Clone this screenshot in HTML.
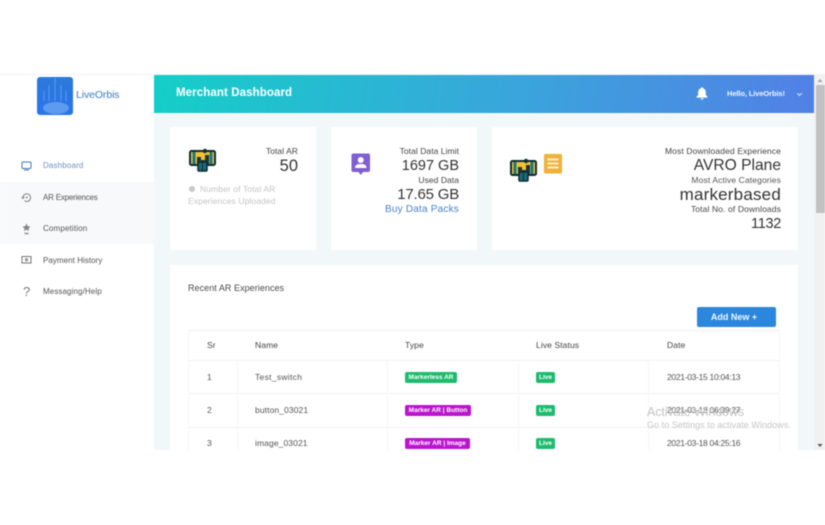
<!DOCTYPE html>
<html><head><meta charset="utf-8">
<style>
html,body{margin:0;padding:0;background:#fff;width:825px;height:525px;overflow:hidden}
body{font-family:"Liberation Sans",sans-serif;position:relative}
#w{position:absolute;left:0;top:0;width:825px;height:525px;overflow:hidden;filter:blur(.4px)}
.a{position:absolute;white-space:nowrap;line-height:1}
.r{position:absolute;white-space:nowrap;line-height:1;text-align:right}
.card{position:absolute;background:#fff}
.nav{position:absolute;left:43px;font-size:8px;color:#555;letter-spacing:.15px;line-height:1;white-space:nowrap}
.th{position:absolute;font-size:8.5px;color:#444;letter-spacing:.1px;line-height:1;white-space:nowrap}
.td{position:absolute;font-size:8.5px;color:#555;letter-spacing:.2px;line-height:1;white-space:nowrap}
.b{position:absolute;height:11px;border-radius:2px;color:#fff;font-size:6.5px;font-weight:bold;line-height:11px;text-align:center;white-space:nowrap;overflow:hidden}
.ln{position:absolute;background:#f0f2f5}
.lv{position:absolute;background:#f6f7f9}
.big{font-size:15px;color:#333;letter-spacing:0}
.sm{font-size:8.5px;color:#444;letter-spacing:.05px}
</style></head><body>
<div id="w">
<div style="position:absolute;left:0;top:74px;width:814px;height:1px;background:#f2f2f2"></div>
<div style="position:absolute;left:0;top:75px;width:814px;height:375px;background:#f2f7fa;overflow:hidden">
  <div style="position:absolute;left:0;top:0;width:154px;height:375px;background:#fff"></div>
  <div style="position:absolute;left:0;top:107px;width:154px;height:62px;background:#f7f9fb"></div>
  <div style="position:absolute;left:154px;top:0;width:660px;height:38px;background:linear-gradient(100deg,#14cfc8 0%,#3aa5dc 55%,#5280e6 100%)"></div>
</div>

<!-- logo -->
<div style="position:absolute;left:37px;top:77px;width:36px;height:38px;border-radius:3px;background:linear-gradient(180deg,#2b7ad8,#2a74ee);overflow:hidden">
  <svg width="36" height="38" viewBox="0 0 36 38">
    <g stroke="#5b9ceb" stroke-width="1" fill="none"><path d="M18 1V24M12 8V24M24 8V24M7 14V24M29 14V24"/></g>
    <ellipse cx="19" cy="31" rx="13" ry="6" fill="#7fb4f2" opacity=".6"/>
  </svg>
</div>
<div class="a" style="left:76px;top:90px;font-size:10.5px;color:#3c7dbd;letter-spacing:-.1px">LiveOrbis</div>

<!-- nav -->
<svg style="position:absolute;left:21px;top:161px" width="11" height="10" viewBox="0 0 11 10"><rect x="1" y="1" width="9" height="6.5" rx="1" fill="none" stroke="#3f78b0" stroke-width="1"/><path d="M3 9H8" stroke="#3f78b0"/></svg>
<div class="nav" style="top:162px;color:#6d93bf">Dashboard</div>
<svg style="position:absolute;left:21px;top:192px" width="11" height="11" viewBox="0 0 11 11"><path d="M2 5.5A3.800 3.800 0 1 1 3.400 8.600" fill="none" stroke="#777" stroke-width=".9"/><path d="M.6 5L2 6.500 3.400 5" fill="none" stroke="#777" stroke-width=".8"/><circle cx="5.800" cy="5.500" r=".9" fill="#777"/></svg>
<div class="nav" style="top:194px;letter-spacing:-.2px">AR Experiences</div>
<svg style="position:absolute;left:21px;top:223px" width="11" height="12" viewBox="0 0 11 12"><path d="M5.500 0.500L6.800 3.300 9.500 3.600 7.500 5.500 8 8 5.500 6.700 3 8 3.500 5.500 1.500 3.600 4.200 3.300Z" fill="#888"/><path d="M3.500 10.500H7.500" stroke="#888" stroke-width="1.400"/></svg>
<div class="nav" style="top:225px">Competition</div>
<svg style="position:absolute;left:21px;top:255px" width="11" height="10" viewBox="0 0 11 10"><rect x="1" y="1.500" width="9" height="6.500" fill="none" stroke="#666" stroke-width=".9"/><rect x="4" y="3.200" width="3" height="3.200" fill="#999"/></svg>
<div class="nav" style="top:257px;letter-spacing:.05px">Payment History</div>
<div class="a" style="left:23px;top:285px;font-size:13px;color:#777">?</div>
<div class="nav" style="top:288px;letter-spacing:.1px">Messaging/Help</div>

<!-- header -->
<div class="a" style="left:176px;top:88px;font-size:11.500px;font-weight:bold;color:#fff;letter-spacing:.1px">Merchant Dashboard</div>
<svg style="position:absolute;left:696px;top:87px" width="12" height="13" viewBox="0 0 12 13"><path d="M6 .3C6.700.3 7.100.8 7.100 1.400 9 1.900 9.800 3.500 9.800 5.500V8L11.500 9.800V10.600H.5V9.800L2.200 8V5.500C2.200 3.500 3 1.900 4.900 1.400 4.900.8 5.300.3 6 .3Z" fill="#fff"/><path d="M4.500 11.200H7.500C7.400 12 6.800 12.600 6 12.600S4.600 12 4.500 11.200Z" fill="#fff"/></svg>
<div class="a" style="left:727px;top:90px;font-size:7.500px;font-weight:bold;color:#eef5fd;letter-spacing:-.1px">Hello, LiveOrbis!</div>
<svg style="position:absolute;left:796px;top:92px" width="7" height="5" viewBox="0 0 7 5"><path d="M1.200 1.200L3.500 3.400 5.800 1.200" fill="none" stroke="#dfeafa" stroke-width="1"/></svg>

<!-- card1 -->
<div class="card" style="left:170px;top:127px;width:146px;height:123px"></div>
<svg style="position:absolute;left:189px;top:148px" width="28" height="24" viewBox="0 0 28 24"><rect x="1" y="3" width="25" height="14" rx="1.500" fill="#f0c231" stroke="#0d2c33" stroke-width="2"/><path d="M5 4V16M22 4V16" stroke="#1a7a88" stroke-width="3"/><path d="M8 16V9H12V12H16V7H20V16Z" fill="#20323a"/><circle cx="16" cy="3" r="2.200" fill="#0d2c33"/><rect x="9" y="14" width="9" height="9" rx="1" fill="#1a6b78" stroke="#0d2c33" stroke-width="1.500"/><path d="M13.500 14V23" stroke="#0d2c33"/></svg>
<div class="r sm" style="right:527px;top:147px">Total AR</div>
<div class="r big" style="right:527px;top:158px;font-size:16.500px">50</div>
<div style="position:absolute;left:189px;top:186px;width:6px;height:6px;border-radius:50%;background:#c8c8c8"></div>
<div class="a" style="left:200px;top:185px;font-size:8.500px;color:#c4c4c4;letter-spacing:.1px">Number of Total AR</div>
<div class="a" style="left:188px;top:197px;font-size:8.500px;color:#c4c4c4;letter-spacing:.1px">Experiences Uploaded</div>

<!-- card2 -->
<div class="card" style="left:331px;top:127px;width:146px;height:123px"></div>
<svg style="position:absolute;left:351px;top:153px" width="20" height="23" viewBox="0 0 20 23"><rect x=".5" y=".5" width="18.500" height="18.500" rx="2" fill="#7f5fd2"/><path d="M7.500 19H12L9.750 22Z" fill="#7f5fd2"/><circle cx="9.750" cy="7" r="3" fill="#fff"/><path d="M4 15C4 11.800 6.500 11 9.750 11S15.500 11.800 15.500 15Z" fill="#fff"/></svg>
<div class="r sm" style="right:366px;top:147px">Total Data Limit</div>
<div class="r big" style="right:366px;top:159px;font-size:14.500px">1697 GB</div>
<div class="r sm" style="right:366px;top:176px">Used Data</div>
<div class="r big" style="right:366px;top:187px;font-size:15px;letter-spacing:-.2px">17.65 GB</div>
<div class="r" style="right:366px;top:205px;font-size:10px;color:#4a82c4;letter-spacing:.2px">Buy Data Packs</div>

<!-- card3 -->
<div class="card" style="left:492px;top:127px;width:306px;height:123px"></div>
<svg style="position:absolute;left:510px;top:158px" width="28" height="24" viewBox="0 0 28 24"><rect x="1" y="3" width="25" height="14" rx="1.500" fill="#f0c231" stroke="#0d2c33" stroke-width="2"/><path d="M5 4V16M22 4V16" stroke="#1a7a88" stroke-width="3"/><path d="M8 16V9H12V12H16V7H20V16Z" fill="#20323a"/><circle cx="16" cy="3" r="2.200" fill="#0d2c33"/><rect x="9" y="14" width="9" height="9" rx="1" fill="#1a6b78" stroke="#0d2c33" stroke-width="1.500"/><path d="M13.500 14V23" stroke="#0d2c33"/></svg>
<svg style="position:absolute;left:544px;top:154px" width="18" height="20" viewBox="0 0 18 20"><rect x="0" y="0" width="18" height="19.500" rx="1" fill="#f2b138"/><path d="M3.500 5.500H14.500M3.500 9.500H14.500M3.500 13.500H14.500" stroke="#fdf0d2" stroke-width="2"/></svg>
<div class="r sm" style="right:44px;top:147px;letter-spacing:.12px">Most Downloaded Experience</div>
<div class="r big" style="right:44px;top:158px;font-size:15.600px">AVRO Plane</div>
<div class="r sm" style="right:44px;top:176px;color:#555;letter-spacing:.12px">Most Active Categories</div>
<div class="r big" style="right:44px;top:186px;font-size:17px;letter-spacing:.2px">markerbased</div>
<div class="r sm" style="right:44px;top:205px;letter-spacing:.12px">Total No. of Downloads</div>
<div class="r big" style="right:44px;top:217px;font-size:14.500px;letter-spacing:-.3px">1132</div>

<!-- table card -->
<div class="card" style="left:170px;top:265px;width:628px;height:185px;overflow:hidden"></div>
<div class="a" style="left:188px;top:284px;font-size:9px;color:#4a4a4a;letter-spacing:.05px">Recent AR Experiences</div>
<div style="position:absolute;left:697px;top:307px;width:79px;height:20px;background:#2b87dc;border-radius:2px;color:#f2f8fe;font-size:9px;font-weight:bold;line-height:20px;text-align:center;text-indent:-5px">Add New +</div>

<div style="position:absolute;left:188px;top:330px;width:592px;height:120px;overflow:hidden">
  <div class="ln" style="left:0;top:0;width:592px;height:1px"></div>
  <div class="ln" style="left:0;top:30px;width:592px;height:1px"></div>
  <div class="ln" style="left:0;top:63px;width:592px;height:1px"></div>
  <div class="ln" style="left:0;top:97px;width:592px;height:1px"></div>
  <div class="lv" style="left:0;top:0;width:1px;height:120px"></div>
  <div class="lv" style="left:591px;top:0;width:1px;height:120px"></div>
  <div class="lv" style="left:49px;top:31px;width:1px;height:89px"></div>
  <div class="lv" style="left:199px;top:31px;width:1px;height:89px"></div>
  <div class="lv" style="left:330px;top:31px;width:1px;height:89px"></div>
  <div class="lv" style="left:460px;top:31px;width:1px;height:89px"></div>
</div>

<div class="th" style="left:207px;top:341px">Sr</div>
<div class="th" style="left:255px;top:341px">Name</div>
<div class="th" style="left:405px;top:341px">Type</div>
<div class="th" style="left:536px;top:341px">Live Status</div>
<div class="th" style="left:667px;top:341px">Date</div>

<div class="td" style="left:207px;top:373px">1</div>
<div class="td" style="left:255px;top:373px;letter-spacing:.3px">Test_switch</div>
<div class="b" style="left:405px;top:372px;width:52px;background:#1dbb6e">Markerless AR</div>
<div class="b" style="left:536px;top:372px;width:19px;background:#1dbb6e">Live</div>
<div class="td" style="left:667px;top:373px;letter-spacing:-.3px">2021-03-15 10:04:13</div>

<div class="td" style="left:207px;top:406px">2</div>
<div class="td" style="left:255px;top:406px;letter-spacing:.1px">button_03021</div>
<div class="b" style="left:405px;top:405px;width:66px;background:#bb14cf">Marker AR | Button</div>
<div class="b" style="left:536px;top:405px;width:19px;background:#1dbb6e">Live</div>
<div class="td" style="left:667px;top:406px;letter-spacing:-.3px">2021-03-18 06:39:27</div>

<div class="td" style="left:207px;top:439px">3</div>
<div class="td" style="left:255px;top:439px;letter-spacing:.1px">image_03021</div>
<div class="b" style="left:405px;top:438px;width:65px;background:#bb14cf">Marker AR | Image</div>
<div class="b" style="left:536px;top:438px;width:19px;background:#1dbb6e">Live</div>
<div class="td" style="left:667px;top:439px;letter-spacing:-.3px">2021-03-18 04:25:16</div>

<!-- activate windows watermark -->
<div class="a" style="left:647px;top:406px;font-size:12.500px;color:#c4c4c4;letter-spacing:-.1px">Activate Windows</div>
<div class="a" style="left:647px;top:421px;font-size:9px;color:#c6c6c6;letter-spacing:.05px">Go to Settings to activate Windows.</div>

<!-- scrollbar -->
<div style="position:absolute;left:814px;top:74px;width:11px;height:376px;background:#f1f1f1"></div>
<div style="position:absolute;left:816px;top:85px;width:9px;height:128px;background:#c1c1c1"></div>
<svg style="position:absolute;left:816px;top:78px" width="8" height="5" viewBox="0 0 8 5"><path d="M4 1L6.500 4H1.500Z" fill="#a3a3a3"/></svg>
<svg style="position:absolute;left:816px;top:443px" width="8" height="5" viewBox="0 0 8 5"><path d="M4 4L6.500 1H1.500Z" fill="#505050"/></svg>

<!-- bottom white mask -->
<div style="position:absolute;left:0;top:450px;width:825px;height:75px;background:#fff"></div>
</div>
</body></html>
